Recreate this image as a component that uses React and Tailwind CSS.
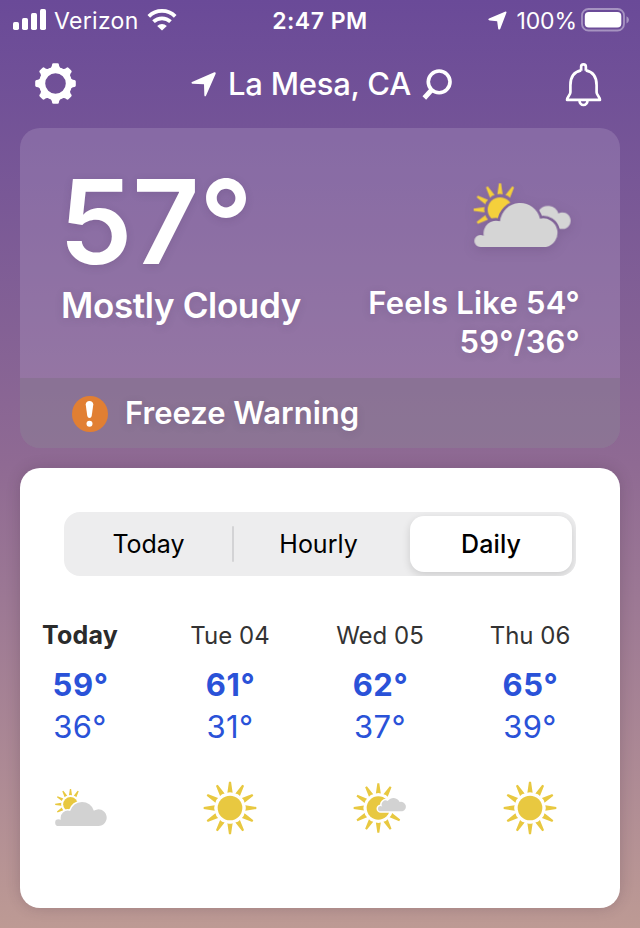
import React from 'react';

const CLOUD_LARGE =
  'M121 261 A18 18 0 0 1 121 225 Q126 225 131 227 A38 38 0 0 1 180 184 A61 61 0 0 1 300 176 A43 43 0 1 1 318 261 Z';
const CLOUD_TODAY =
  'M117 648 A10 10 0 0 1 117 628 Q121 628 124 629 A22 22 0 0 1 152 603 A37 37 0 0 1 223 602 A25 25 0 1 1 236 648 Z';
const CLOUD_SMALL =
  'M181 604 A8 8 0 0 1 181 588 Q184 588 186 590 A12 12 0 0 1 202 573 A21 21 0 0 1 238 576 A14.500 14.500 0 1 1 246 604 Z';

const Sun = ({ cx, cy, r, outer, rays, color }) => {
  const inner = r * 1.24;
  const w = outer * 0.1;
  return (
    <g transform={`translate(${cx} ${cy})`} fill={color}>
      <circle r={r} />
      {rays.map((angle) => (
        <path
          key={angle}
          d={`M${-w} ${-inner} L${-w * 0.4} ${-outer} H${w * 0.4} L${w} ${-inner} Q0 ${-inner - w * 0.4} ${-w} ${-inner} Z`}
          transform={`rotate(${angle})`}
        />
      ))}
    </g>
  );
};

const ALL_RAYS = [0, 30, 60, 90, 120, 150, 180, 210, 240, 270, 300, 330];

const MostlyCloudyIcon = () => (
  <svg viewBox="96 63 300 210" className="h-[70px] w-[100px] overflow-visible drop-shadow-[0_3px_6px_rgba(60,40,80,0.18)]">
    <mask id="hero-gap" maskUnits="userSpaceOnUse" x="90" y="50" width="320" height="230">
      <rect x="90" y="50" width="320" height="230" fill="white" />
      <path d={CLOUD_LARGE} fill="black" stroke="black" strokeWidth="16" />
    </mask>
    <g mask="url(#hero-gap)">
      <Sun cx={180} cy={149} r={37} outer={79} rays={[240, 270, 300, 330, 0, 30]} color="#f5d03b" />
      <path d="M290 180 L296 153 A33 33 0 0 1 355 160 A25 25 0 1 1 368 207 L330 207 Z" fill="#d5d5d5" />
    </g>
    <path d={CLOUD_LARGE} fill="#d5d5d5" />
  </svg>
);

const TodayIcon = () => (
  <svg viewBox="104 513 158 162" className="h-[54px] w-[53px]">
    <mask id="today-gap" maskUnits="userSpaceOnUse" x="100" y="510" width="170" height="180">
      <rect x="100" y="510" width="170" height="180" fill="white" />
      <path d={CLOUD_TODAY} fill="black" stroke="black" strokeWidth="9" />
    </mask>
    <g mask="url(#today-gap)">
      <Sun cx={153} cy={583} r={22} outer={46} rays={[240, 270, 300, 330, 0, 30]} color="#e8c840" />
    </g>
    <path d={CLOUD_TODAY} fill="#d2d2d2" />
  </svg>
);

const SunnyIcon = () => (
  <svg viewBox="-81 -81 162 162" className="size-[54px]">
    <Sun cx={0} cy={0} r={37} outer={79} rays={ALL_RAYS} color="#e8c840" />
  </svg>
);

const PartlyCloudyIcon = () => (
  <svg viewBox="98 513 162 162" className="size-[54px]">
    <mask id="partly-gap" maskUnits="userSpaceOnUse" x="90" y="500" width="190" height="190">
      <rect x="90" y="500" width="190" height="190" fill="white" />
      <path d={CLOUD_SMALL} fill="black" stroke="black" strokeWidth="9" />
    </mask>
    <g mask="url(#partly-gap)">
      <Sun cx={174} cy={594} r={35} outer={74} rays={[0, 30, 120, 150, 180, 210, 240, 270, 300, 330]} color="#e8c840" />
    </g>
    <path d={CLOUD_SMALL} fill="#d2d2d2" />
  </svg>
);

const StatusBar = () => (
  <div className="flex h-[41px] items-center">
    <div className="flex w-[214px] items-center pl-[13px]">
      <svg viewBox="0 0 33 22" className="-mt-px h-[22px] w-[33px] shrink-0" fill="white">
        <rect x="0" y="13" width="6" height="8" rx="1.700" />
        <rect x="9" y="9" width="6" height="12" rx="1.700" />
        <rect x="18" y="4" width="6" height="17" rx="1.700" />
        <rect x="27" y="0" width="6" height="21" rx="1.700" />
      </svg>
      <span className="mt-px ml-[8px] w-[93px] text-[23px] tracking-[0.3px] whitespace-nowrap">Verizon</span>
      <svg viewBox="0 0 30 22" className="-mt-px h-[22px] w-[30px] shrink-0" fill="none" stroke="white" strokeWidth="3.800">
        <path d="M1.800 7.300 A19 19 0 0 1 28.200 7.300" />
        <path d="M6.500 12.700 A12.500 12.500 0 0 1 23.500 12.700" />
        <path d="M15 21.500 L10.200 16.900 A7 7 0 0 1 19.800 16.900 Z" fill="white" stroke="none" />
      </svg>
    </div>
    <div className="mt-px flex-1 text-center text-[23px] font-semibold tracking-[0.5px]">2:47 PM</div>
    <div className="flex w-[214px] items-center justify-end pr-[10px]">
      <svg viewBox="144 34 56 56" className="mr-[9px] size-[19px]" fill="white">
        <path d="M194 36 Q200 34 198 40 L180 87 Q176 91 174 86 L171 64 L149 62 Q142 60 147 56 Z" />
      </svg>
      <span className="mt-px text-[23px] tracking-[-0.1px]">100%</span>
      <svg viewBox="0 0 49 24" className="-mt-px ml-[4px] h-[24px] w-[49px]">
        <rect x="1" y="1" width="42" height="21.500" rx="6.500" fill="none" stroke="white" strokeOpacity="0.4" strokeWidth="1.800" />
        <rect x="3.800" y="4" width="36.500" height="15.500" rx="4" fill="white" />
        <path d="M45.500 8.200 Q48 9.500 48 11.800 Q48 14 45.500 15.500 Z" fill="white" fillOpacity="0.4" />
      </svg>
    </div>
  </div>
);

const GearIcon = () => (
  <svg viewBox="-20.500 -20.500 41 41" className="size-[41px]">
    <circle r="13.300" fill="none" stroke="white" strokeWidth="6" />
    {[0, 45, 90, 135, 180, 225, 270, 315].map((angle) => (
      <path
        key={angle}
        d="M-7.500 -14.500 Q-3.500 -15.500 -3.400 -19 Q-3.300 -20.200 -2 -20.300 H2 Q3.300 -20.200 3.400 -19 Q3.500 -15.500 7.500 -14.500 Z"
        fill="white"
        transform={`rotate(${angle})`}
      />
    ))}
  </svg>
);

const Header = () => (
  <div className="flex h-[87px] items-center justify-between pr-[38px] pl-[35px]">
    <button aria-label="Settings" className="-mt-[3px] w-[60px]">
      <GearIcon />
    </button>
    <div className="flex items-center pl-[7px]">
      <svg viewBox="35 214 75 75" className="mr-[12px] size-[25px]" fill="white">
        <path d="M105 215 Q110 214 109 219 L80 285 Q76 290 75 284 L74 251 L39 249 Q34 247 38 244 Z" />
      </svg>
      <span className="text-[31px] font-medium tracking-[-0.25px] whitespace-nowrap">La Mesa, CA</span>
      <svg viewBox="724 202 94 98" className="-mt-px ml-[11px] h-[33px] w-[31px]" fill="none" stroke="white">
        <circle cx="776" cy="243" r="33" strokeWidth="11" />
        <path d="M752 269 L731 292" strokeWidth="15" />
      </svg>
    </div>
    <button aria-label="Alerts" className="flex w-[60px] justify-end">
      <svg viewBox="376 186 110 134" className="h-[45px] w-[37px]" fill="none" stroke="white" strokeWidth="8" strokeLinejoin="round">
        <path d="M424 211 C404 215 392 230 392 255 V276 C392 285 382 290 382 299 H480 C480 290 470 285 470 276 V255 C470 230 458 215 438 211" />
        <path d="M424 212 V200 A7 7 0 0 1 438 200 V212" />
        <path d="M419 300 A12 14 0 0 0 443 300" />
      </svg>
    </button>
  </div>
);

const CurrentConditions = () => (
  <div className="mx-5 flex h-[320px] flex-col overflow-hidden rounded-[20px] bg-[#b4a0c8]/30 font-semibold text-shadow-[0_2px_8px_rgba(60,40,80,0.15)]">
    <div className="flex h-[250px] justify-between pr-[40px] pl-[41px]">
      <div className="pt-[36px]">
        <div className="-ml-[2px] h-[116px] text-[117px] leading-[116px] tracking-[-0.4px]">57°</div>
        <div className="text-[35px] leading-[50px] tracking-[-0.35px] whitespace-nowrap">Mostly Cloudy</div>
      </div>
      <div className="flex flex-col items-end pt-[53px] text-[31px] leading-[39px] tracking-[0.2px]">
        <div className="mr-[8px] mb-8 h-[70px]">
          <MostlyCloudyIcon />
        </div>
        <div className="whitespace-nowrap">Feels Like 54°</div>
        <div>59°/36°</div>
      </div>
    </div>
    <div className="flex flex-1 items-center bg-[#7b6e80]/40 pl-[52px]">
      <svg viewBox="-18 -18 36 36" className="mt-px size-9">
        <circle r="18" fill="#e17f33" />
        <path d="M-4.300 -9.500 Q-4 -13 -0.500 -13 Q3 -13 3.300 -9.500 L1.700 2 Q1.300 4 -0.500 4 Q-2.300 4 -2.700 2 Z" fill="white" />
        <circle cx="-0.500" cy="9.700" r="3" fill="white" />
      </svg>
      <span className="ml-[17px] text-[31px]">Freeze Warning</span>
    </div>
  </div>
);

const Tabs = () => (
  <div className="mx-[44px] flex h-16 items-center overflow-hidden rounded-2xl bg-[#ededee] p-1 text-[25px] text-black">
    <button className="h-full w-[164px] pt-0.5 pr-[3px]">Today</button>
    <div className="h-9 w-0.5 rounded-full bg-[#d3d3d5]" />
    <button className="h-full flex-1 pt-0.5 pr-[7px]">Hourly</button>
    <button className="h-full w-[162px] rounded-[14px] bg-white pt-0.5 font-medium tracking-[0.1px] shadow-[0_3px_8px_rgba(0,0,0,0.14)]">Daily</button>
  </div>
);

const days = [
  { label: 'Today', high: '59°', low: '36°', Icon: TodayIcon, current: true },
  { label: 'Tue 04', high: '61°', low: '31°', Icon: SunnyIcon },
  { label: 'Wed 05', high: '62°', low: '37°', Icon: PartlyCloudyIcon },
  { label: 'Thu 06', high: '65°', low: '39°', Icon: SunnyIcon },
];

const Forecast = () => (
  <div className="-ml-[15px] grid w-[600px] grid-cols-4 pt-10 text-center">
    {days.map(({ label, high, low, Icon, current }) => (
      <div key={label} className="flex flex-col items-center">
        <div
          className={
            current
              ? 'text-[25px] leading-[39px] font-bold tracking-[0.2px] text-[#2b2b2b]'
              : 'text-[24px] leading-[40px] text-[#333333]'
          }
        >
          {label}
        </div>
        <div className={`${current ? 'mt-[9px]' : 'mt-2'} pl-px text-[31px] leading-[42px] font-bold tracking-[0.6px] text-[#2a52d8]`}>{high}</div>
        <div className="text-[31px] leading-[42px] tracking-[0.4px] text-[#2a52d8]">{low}</div>
        <div className="mt-[33px] flex h-[54px] items-center">
          <Icon />
        </div>
      </div>
    ))}
  </div>
);

export default function App() {
  return (
    <div className="h-[928px] w-[640px] overflow-hidden bg-linear-to-b from-[#6a4a98] via-[#8f6a93] via-50% to-[#bd9a94] font-['Inter',sans-serif] text-white">
      <StatusBar />
      <Header />
      <CurrentConditions />
      <div className="mx-5 mt-5 h-[440px] overflow-hidden rounded-[20px] bg-white pt-[44px] shadow-[0_0_14px_rgba(60,40,60,0.22)]">
        <Tabs />
        <Forecast />
      </div>
    </div>
  );
}
